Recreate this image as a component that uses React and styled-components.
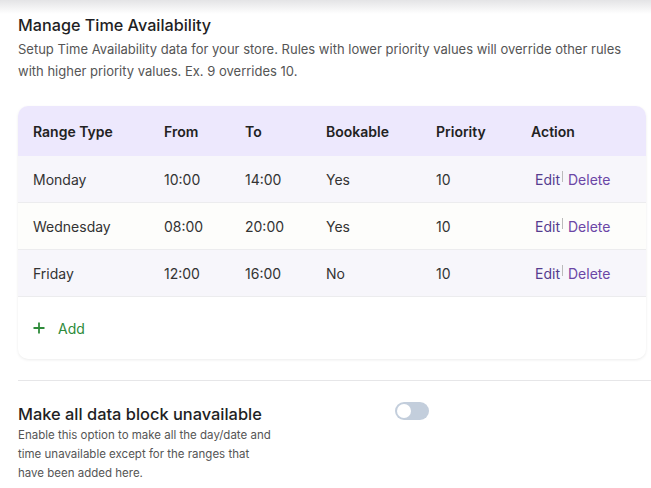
import styled, { createGlobalStyle } from 'styled-components'

const GlobalStyle = createGlobalStyle`
  body {
    margin: 0;
    background: #ffffff;
    font-family: Inter, 'Noto Sans', sans-serif;
    color: #222;
  }
`

const TopShade = styled.div`
  height: 14px;
  background: linear-gradient(#e4e4e6, #ffffff);
`

const Page = styled.div`
  padding: 0 0 0 18px;
`

const Title = styled.h2`
  margin: 0;
  font-size: 16.2px;
  font-weight: 500;
  line-height: 22px;
  color: #1f1f24;
`

const Description = styled.p`
  margin: 2px 0 0;
  font-size: 13px;
  line-height: 22px;
  color: #555;
  padding-right: 10px;
`

const Card = styled.div`
  margin: 24px 5px 0 0;
  border-radius: 10px;
  background: #fff;
  box-shadow: 0 1px 3px rgba(0, 0, 0, 0.08);
  overflow: hidden;
`

const Row = styled.div`
  display: grid;
  grid-template-columns: 131px 81px 81px 110px 95px 1fr;
  align-items: center;
  padding-left: 15px;
  height: ${(p) => (p.$head ? '50px' : '47px')};
  background: ${(p) => (p.$head ? '#ede8fd' : p.$alt ? '#fdfdfb' : '#f7f6fb')};
  border-bottom: ${(p) => (p.$head ? 'none' : '1px solid #ececee')};
  box-sizing: border-box;
`

const Cell = styled.div`
  font-size: 14px;
  font-weight: ${(p) => (p.$head ? 600 : 400)};
  color: ${(p) => (p.$head ? '#222' : '#333')};
`

const Actions = styled.div`
  display: flex;
  align-items: flex-start;
  padding-left: 4px;
  font-size: 14px;
`

const ActionLink = styled.a`
  color: ${(p) => (p.$danger ? '#6b46a6' : '#553c8f')};
  cursor: pointer;
  line-height: 17px;
  ${(p) =>
    p.$danger &&
    `
    margin-left: 2px;
    padding-left: 6px;
    position: relative;
    &::before {
      content: '';
      position: absolute;
      left: 0;
      top: 0;
      height: 11px;
      border-left: 1px solid #bbb;
    }
  `}
`

const AddRow = styled.div`
  height: 62px;
  display: flex;
  align-items: center;
  padding-left: 15px;
  gap: 13px;
  color: #2e8b3a;
  font-size: 14px;
  cursor: pointer;
`

const Divider = styled.hr`
  margin: 21px 0 0;
  border: none;
  border-top: 1px solid #e6e6e8;
`

const OptionRow = styled.div`
  display: grid;
  grid-template-columns: 377px auto;
  padding-top: 21px;
`

const OptionTitle = styled.div`
  font-size: 16.4px;
  font-weight: 500;
  line-height: 24px;
  color: #1f1f24;
`

const OptionText = styled.div`
  width: 258px;
  font-size: 11.5px;
  line-height: 19px;
  color: #555;
`

const Switch = styled.span`
  display: block;
  width: 34px;
  height: 18px;
  border-radius: 9px;
  background: #c3cedc;
  position: relative;
  cursor: pointer;
  &::after {
    content: '';
    position: absolute;
    left: 2px;
    top: 2px;
    width: 14px;
    height: 14px;
    border-radius: 50%;
    background: #fff;
  }
`

const rows = [
  { type: 'Monday', from: '10:00', to: '14:00', bookable: 'Yes', priority: '10' },
  { type: 'Wednesday', from: '08:00', to: '20:00', bookable: 'Yes', priority: '10' },
  { type: 'Friday', from: '12:00', to: '16:00', bookable: 'No', priority: '10' }
]

const headers = ['Range Type', 'From', 'To', 'Bookable', 'Priority', 'Action']

const App = () => {
  return (
    <>
      <GlobalStyle />
      <TopShade />
      <Page>
        <Title>Manage Time Availability</Title>
        <Description>
          Setup Time Availability data for your store. Rules with lower priority values will
          override other rules with higher priority values. Ex. 9 overrides 10.
        </Description>
        <Card>
          <Row $head>
            {headers.map((h) => (
              <Cell $head key={h}>
                {h}
              </Cell>
            ))}
          </Row>
          {rows.map((r, i) => (
            <Row key={r.type} $alt={i % 2 === 1}>
              <Cell>{r.type}</Cell>
              <Cell>{r.from}</Cell>
              <Cell>{r.to}</Cell>
              <Cell>{r.bookable}</Cell>
              <Cell>{r.priority}</Cell>
              <Actions>
                <ActionLink>Edit</ActionLink>
                <ActionLink $danger>Delete</ActionLink>
              </Actions>
            </Row>
          ))}
          <AddRow>
            <svg width='12' height='12' viewBox='0 0 12 12'>
              <path d='M6 0.5v11M0.5 6h11' stroke='#2e8b3a' strokeWidth='1.8' />
            </svg>
            <span>Add</span>
          </AddRow>
        </Card>
        <Divider />
        <OptionRow>
          <div>
            <OptionTitle>Make all data block unavailable</OptionTitle>
            <OptionText>
              Enable this option to make all the day/date and time unavailable except for the
              ranges that have been added here.
            </OptionText>
          </div>
          <div>
            <Switch />
          </div>
        </OptionRow>
      </Page>
    </>
  )
}

export default App
